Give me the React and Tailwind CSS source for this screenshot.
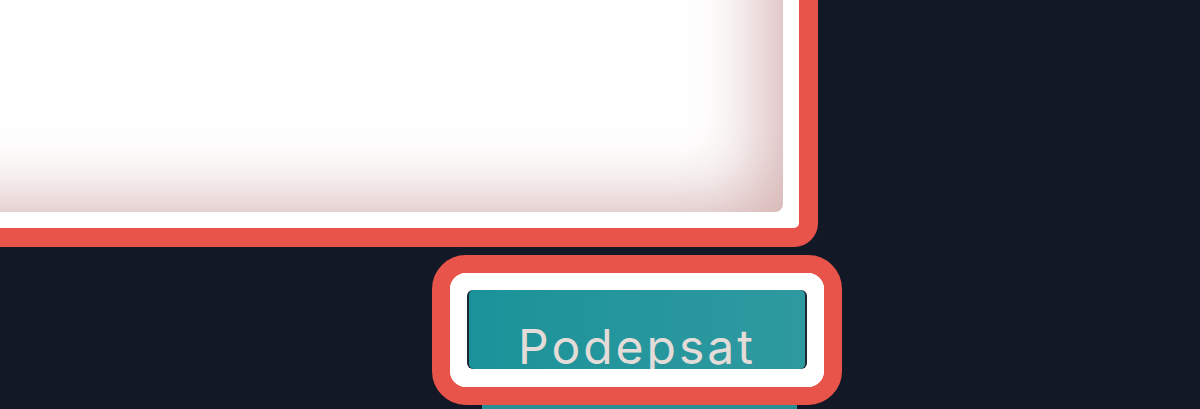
import React from 'react';

const App = () => (
    <div className="w-[1200px] h-[409px] overflow-hidden bg-[#131827] font-['Inter','Liberation_Sans',sans-serif]">
        {/* text area, cropped by the top-left edge */}
        <div className="-mt-[60px] -ml-[60px] w-[878px] h-[307px] rounded-[24px] border-[19px] border-[#e9544a] bg-white">
            <div className="h-full w-full rounded-[8px] bg-white p-[16px]">
                <div className="h-full w-full rounded-[8px] bg-white shadow-[inset_-60px_-50px_70px_-40px_rgba(200,155,155,0.75)]" />
            </div>
        </div>

        <div className="ml-[432px] mt-[8px] flex flex-col">
            <div className="w-[410px] h-[150px] rounded-[34px] border-[18px] border-[#e9544a] bg-white">
                <div className="h-full w-full rounded-[16px] bg-white p-[17px] pb-[18px]">
                    <div className="h-full w-full rounded-[6px] bg-[#1c2733] px-[2px]">
                        <div className="h-full w-full overflow-hidden rounded-[5px] bg-gradient-to-r from-[#1a9299] to-[#2e9aa0] flex justify-center pt-[33px]">
                            <span className="text-[48px] leading-none tracking-[3px] text-[#e4dcd8]">Podepsat</span>
                        </div>
                    </div>
                </div>
            </div>
            <div className="ml-[50px] h-[4px] w-[315px] bg-[#2a8f95]" />
        </div>
    </div>
);

export default App;
